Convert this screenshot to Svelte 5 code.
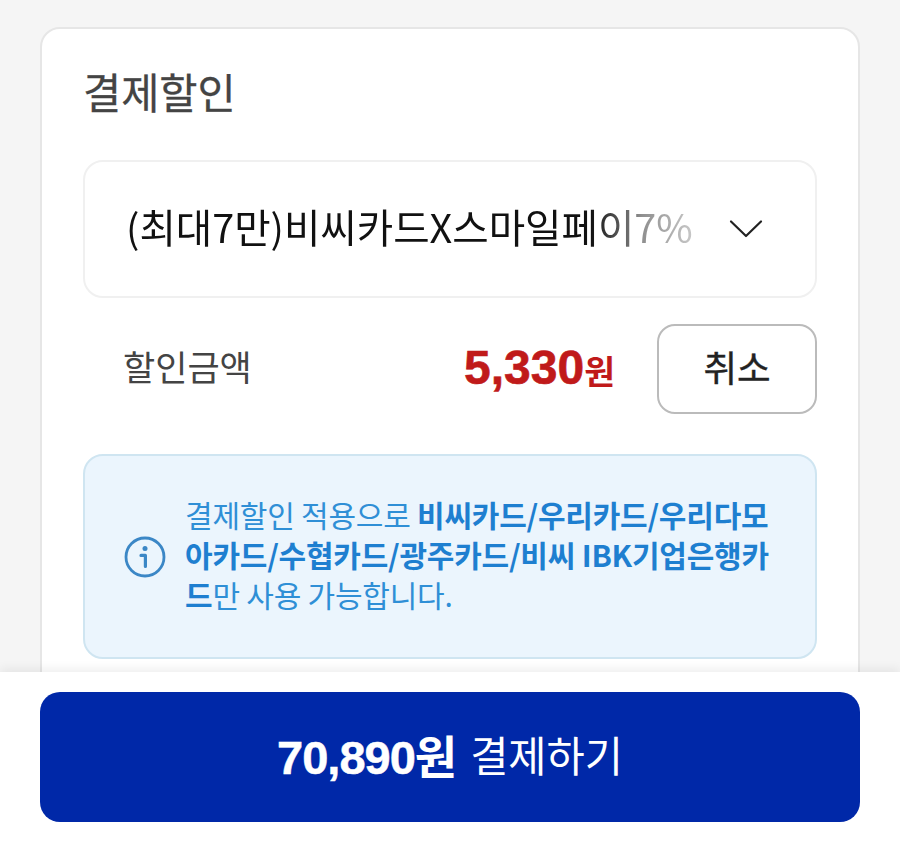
<script>
  const title = '결제할인';
</script>

<div class="page">
  <main class="scroll">
    <section class="card">
      <h2>{title}</h2>
      <div class="select">
        <span class="select-text">(최대7만)비씨카드X스마일페이7%</span>
        <svg class="chev" width="34" height="20" viewBox="0 0 34 20" fill="none" stroke="#222" stroke-width="2.2" stroke-linecap="round" stroke-linejoin="round"><path d="M2 2.5 17 17 32 2.5"/></svg>
      </div>
      <div class="row">
        <span class="label">할인금액</span>
        <span class="amount"><b>5,330</b><em>원</em></span>
        <button class="cancel">취소</button>
      </div>
      <div class="info">
        <svg class="i" width="42" height="42" viewBox="0 0 42 42" fill="none"><circle cx="21" cy="21" r="19" stroke="#3b87c6" stroke-width="2.8"/><circle cx="21" cy="12.4" r="2.5" fill="#3b87c6"/><path d="M17 19.4H21.4V30.5" stroke="#3b87c6" stroke-width="3.2" stroke-linecap="round" stroke-linejoin="round"/></svg>
        <p>결제할인 적용으로 <strong>비씨카드/우리카드/우리다모<br/>아카드/수협카드/광주카드/비씨 IBK기업은행카<br/>드</strong>만 사용 가능합니다.</p>
      </div>
    </section>
  </main>
  <footer>
    <button class="pay"><b>70,890<i>원</i></b> <span>결제하기</span></button>
  </footer>
</div>

<style>
  :global(body) { margin: 0; background: #f5f5f5; }
  .page { height: 841px; width: 900px; display: flex; flex-direction: column; overflow: hidden; font-family: "Noto Sans CJK KR", "Noto Sans", sans-serif; }
  .scroll { flex: 1; min-height: 0; overflow: hidden; padding: 27px 40px 0; }
  .card { background: #fff; border: 2px solid #e6e6e6; border-radius: 20px; padding: 33px 41px 60px; }
  h2 { margin: 0; font-size: 41.5px; line-height: 58px; font-weight: 400; color: #444; -webkit-text-stroke: 0.3px #444; }
  .select { margin-top: 40px; height: 138px; box-sizing: border-box; border: 2px solid #f0f0f0; border-radius: 20px; display: flex; align-items: center; padding: 0 52px 0 41px; justify-content: space-between; }
  .select-text { flex: none; font-size: 39.6px; line-height: 58px; padding-bottom: 6px; white-space: nowrap; background: linear-gradient(90deg, #111 0, #111 82%, #8f8f8f 91%, #c8c8c8 100%); -webkit-background-clip: text; background-clip: text; color: transparent; }
  .row { margin-top: 26px; display: flex; align-items: center; padding-left: 40px; }
  .label { font-size: 35px; line-height: 50px; padding-bottom: 6px; color: #444; flex: 1; }
  .amount { color: #c01a1a; display: flex; align-items: baseline; margin-right: 42px; padding-bottom: 3px; }
  .amount b { font-family: "Liberation Sans", sans-serif; font-size: 48px; font-weight: 700; -webkit-text-stroke: 0.6px #c01a1a; }
  .amount em { font-style: normal; font-weight: 700; font-size: 33.5px; }
  .cancel { width: 160px; height: 90px; box-sizing: border-box; border: 2px solid #bbb; border-radius: 18px; background: #fff; font: 400 36.5px "Noto Sans CJK KR", sans-serif; -webkit-text-stroke: 0.4px #222; color: #222; padding: 0 0 6px; }
  .info { margin-top: 40px; height: 205px; box-sizing: border-box; background: #ebf5fd; border: 2px solid #cfe5f1; border-radius: 20px; display: flex; align-items: center; padding: 0 0 0 39px; gap: 19px; }
  .i { flex: none; }
  .info p { margin: 0 0 6px; font-size: 30px; line-height: 40px; color: #2f8fd6; white-space: nowrap; letter-spacing: -0.22px; }
  .info strong { font-weight: 700; color: #1e7fd0; }
  footer { flex: none; height: 169px; background: #fff; box-shadow: 0 -3px 10px rgba(0,0,0,.07); padding: 20px 40px 0; box-sizing: border-box; position: relative; }
  .pay { width: 100%; height: 130px; border: 0; border-radius: 20px; background: #0028a8; color: #fff; font-family: "Noto Sans CJK KR", sans-serif; padding: 0 0 6px; display: flex; align-items: center; justify-content: center; gap: 13px; }
  .pay b { font-family: "Liberation Sans", sans-serif; font-size: 47px; font-weight: 700; letter-spacing: -1px; display: flex; align-items: baseline; -webkit-text-stroke: 0.5px #fff; }
  .pay i { font-family: "Noto Sans CJK KR", sans-serif; font-style: normal; font-size: 46px; font-weight: 700; letter-spacing: 0; -webkit-text-stroke: 0; }
  .pay span { font-size: 41.5px; font-weight: 400; }
</style>
